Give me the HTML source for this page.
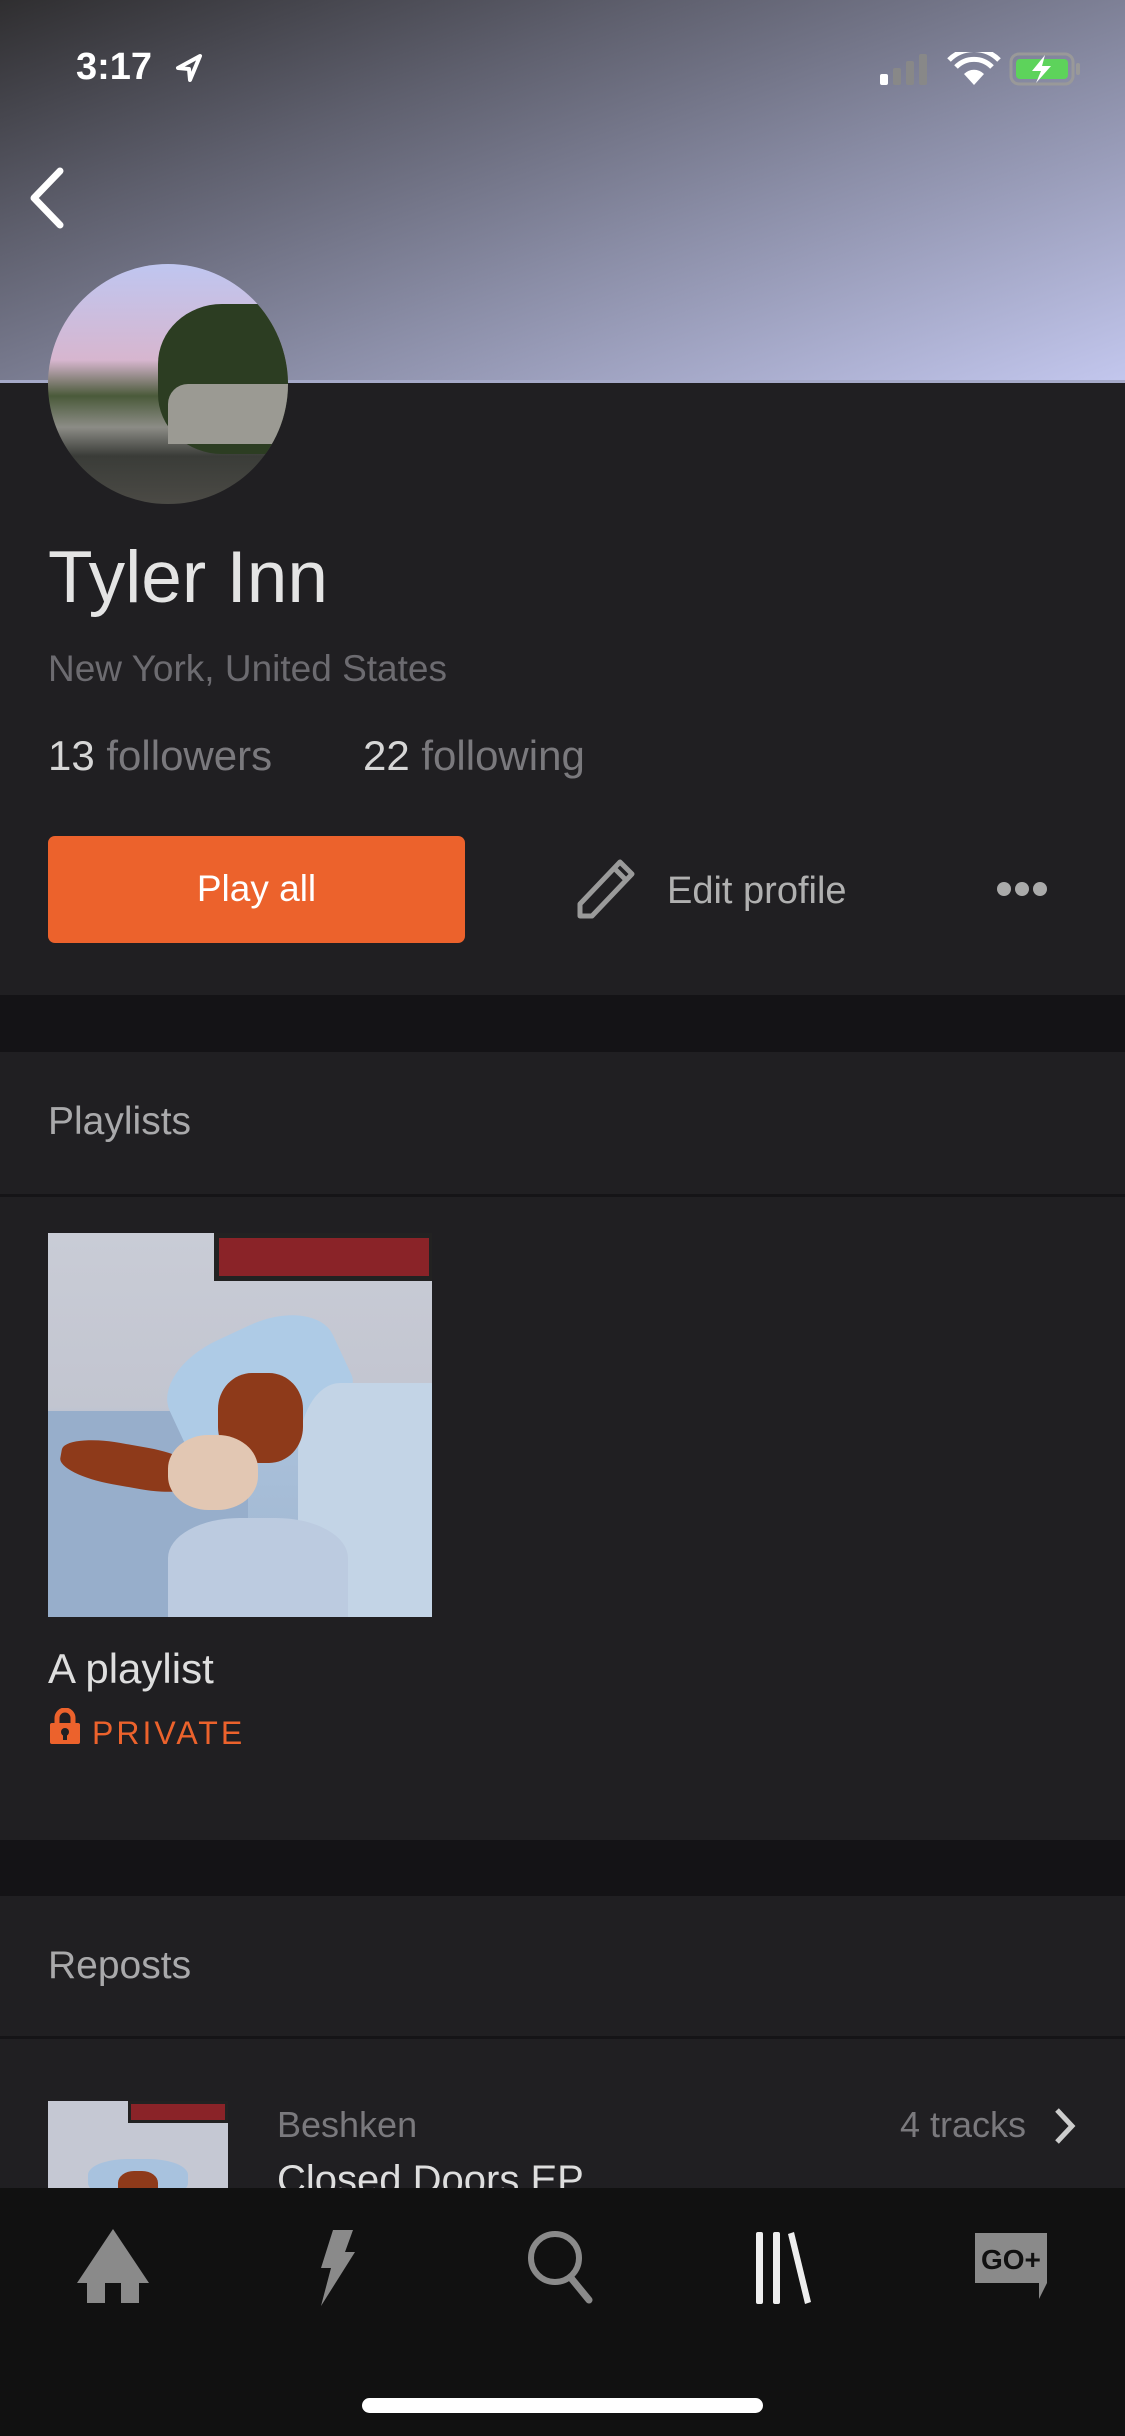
<!DOCTYPE html>
<html><head><meta charset="utf-8"><style>
*{margin:0;padding:0;box-sizing:border-box}
body{width:1125px;height:2436px;background:#201f22;font-family:"Liberation Sans",sans-serif;position:relative;overflow:hidden}
.a{position:absolute}
.t{position:absolute;white-space:nowrap}
</style></head><body>
<div class="a" style="left:0;top:0;width:1125px;height:383px;background:linear-gradient(160deg,#2f2e30 0%,#5e5f6d 30%,#8a8da6 60%,#c3c7ee 100%)"></div>
<div class="a" style="left:0;top:380px;width:1125px;height:3px;background:#a5a9c8"></div>
<div class="t" style="left:76px;top:46px;font-size:38px;color:#fff;font-weight:bold">3:17</div>
<svg class="a" style="left:174px;top:52px" width="30" height="32" viewBox="0 0 30 32"><path d="M26 4 L4 16 L15 17 L16 28 Z" fill="none" stroke="#fff" stroke-width="4" stroke-linejoin="round"/></svg>
<svg class="a" style="left:878px;top:52px" width="210" height="34" viewBox="0 0 210 34">
<rect x="2" y="22" width="8" height="11" rx="2" fill="#fff"/><rect x="15" y="16" width="8" height="17" rx="2" fill="#888"/><rect x="28" y="9" width="8" height="24" rx="2" fill="#888"/><rect x="41" y="2" width="8" height="31" rx="2" fill="#888"/>
<path d="M96 33 L86 22 A14 14 0 0 1 106 22 Z" fill="#fff"/><path d="M78 15 A25 25 0 0 1 114 15" fill="none" stroke="#fff" stroke-width="5"/><path d="M71 8 A35 35 0 0 1 121 8" fill="none" stroke="#fff" stroke-width="5"/>
<rect x="133" y="2" width="62" height="30" rx="8" fill="none" stroke="#999" stroke-width="3"/><rect x="138" y="7" width="52" height="20" rx="4" fill="#5dd35b"/><rect x="198" y="11" width="4" height="12" rx="2" fill="#999"/>
<path d="M167 3 L154 19 L163 19 L158 31 L173 14 L164 14 Z" fill="#fff"/></svg>
<svg class="a" style="left:24px;top:165px" width="44" height="66" viewBox="0 0 44 66"><path d="M36 6 L10 33 L36 60" fill="none" stroke="#fff" stroke-width="7" stroke-linecap="round" stroke-linejoin="round"/></svg>
<div class="a" style="left:48px;top:264px;width:240px;height:240px;border-radius:50%;overflow:hidden;background:linear-gradient(180deg,#bfc6f0 0%,#d7b6cf 40%,#4a5a3a 55%,#8c8c86 68%,#3a3c38 80%,#4b4a45 100%)">
<div class="a" style="left:110px;top:40px;width:160px;height:150px;border-radius:40% 0 0 40%;background:#2c3d22"></div>
<div class="a" style="left:120px;top:120px;width:140px;height:60px;background:#9b9a93;border-radius:20px 0 0 0"></div>
</div>
<div class="t" style="left:48px;top:536px;font-size:73px;color:#e4e4e4">Tyler Inn</div>
<div class="t" style="left:48px;top:648px;font-size:37px;color:#6c6b70">New York, United States</div>
<div class="t" style="left:48px;top:732px;font-size:42px;color:#7a797d"><span style="color:#d6d6d6">13</span> followers</div>
<div class="t" style="left:363px;top:732px;font-size:42px;color:#7a797d"><span style="color:#d6d6d6">22</span> following</div>
<div class="a" style="left:48px;top:836px;width:417px;height:107px;background:#ec622c;border-radius:7px"></div>
<div class="t" style="left:48px;top:868px;width:417px;text-align:center;font-size:37px;color:#fff">Play all</div>
<svg class="a" style="left:576px;top:856px" width="64" height="64" viewBox="0 0 64 64"><path d="M4 60 L4 48 L44 6 L56 18 L16 60 Z M38 12 L50 24" fill="none" stroke="#9a9a9a" stroke-width="5" stroke-linejoin="round"/></svg>
<div class="t" style="left:667px;top:870px;font-size:38px;color:#b0b0b0">Edit profile</div>
<svg class="a" style="left:996px;top:880px" width="52" height="18"><circle cx="8" cy="9" r="7" fill="#aaa"/><circle cx="26" cy="9" r="7" fill="#aaa"/><circle cx="44" cy="9" r="7" fill="#aaa"/></svg>
<div class="a" style="left:0;top:995px;width:1125px;height:57px;background:#141316"></div>
<div class="t" style="left:48px;top:1100px;font-size:39px;color:#a9a9ab">Playlists</div>
<div class="a" style="left:0;top:1194px;width:1125px;height:3px;background:#151417"></div>
<div class="a" style="left:48px;top:1233px;width:384px;height:384px;overflow:hidden;background:linear-gradient(180deg,#c9ccd6 0%,#c2c5d0 45%,#a9c0da 55%,#9fb5cf 100%)">
<div class="a" style="left:166px;top:0;width:220px;height:48px;background:#8a2328;border:5px solid #222"></div>
<div class="a" style="left:0;top:178px;width:200px;height:206px;background:#97aecb"></div>
<div class="a" style="left:118px;top:95px;width:180px;height:110px;background:#aecbe6;border-radius:40% 40% 20% 20%;transform:rotate(-25deg)"></div>
<div class="a" style="left:250px;top:150px;width:140px;height:240px;background:#c3d4e6;border-radius:30% 0 0 0"></div>
<div class="a" style="left:170px;top:140px;width:85px;height:90px;background:#8e3a1a;border-radius:40%"></div>
<div class="a" style="left:12px;top:212px;width:140px;height:42px;background:#8e3a1a;border-radius:40%;transform:rotate(10deg)"></div>
<div class="a" style="left:120px;top:202px;width:90px;height:75px;background:#e2c7b3;border-radius:45%"></div>
<div class="a" style="left:120px;top:285px;width:180px;height:100px;background:#bccbe0;border-radius:40% 40% 0 0"></div>
</div>
<div class="t" style="left:48px;top:1645px;font-size:42px;color:#dedede">A playlist</div>
<svg class="a" style="left:50px;top:1708px" width="30" height="36" viewBox="0 0 30 36"><path d="M7 16 V10 A8 8 0 0 1 23 10 V16" fill="none" stroke="#ec622c" stroke-width="5"/><rect x="0" y="15" width="30" height="21" rx="2" fill="#ec622c"/><circle cx="15" cy="24" r="4" fill="#201f22"/><rect x="13" y="25" width="4" height="7" fill="#201f22"/></svg>
<div class="t" style="left:92px;top:1715px;font-size:32px;color:#ec622c;letter-spacing:3px">PRIVATE</div>
<div class="a" style="left:0;top:1840px;width:1125px;height:56px;background:#141316"></div>
<div class="t" style="left:48px;top:1944px;font-size:39px;color:#a9a9ab">Reposts</div>
<div class="a" style="left:0;top:2036px;width:1125px;height:3px;background:#151417"></div>
<div class="a" style="left:48px;top:2101px;width:180px;height:90px;overflow:hidden;background:#c5c8d3">
<div class="a" style="left:80px;top:0;width:100px;height:22px;background:#8a2328;border:3px solid #222"></div>
<div class="a" style="left:40px;top:58px;width:100px;height:40px;background:#a8c2de;border-radius:40%"></div>
<div class="a" style="left:70px;top:70px;width:40px;height:30px;background:#8e3a1a;border-radius:40%"></div>
</div>
<div class="t" style="left:277px;top:2104px;font-size:36px;color:#7a797d">Beshken</div>
<div class="t" style="left:900px;top:2104px;font-size:36px;color:#7a797d">4 tracks</div>
<svg class="a" style="left:1052px;top:2106px" width="26" height="40"><path d="M5 4 L20 20 L5 36" fill="none" stroke="#ccc" stroke-width="5"/></svg>
<div class="t" style="left:277px;top:2158px;font-size:40px;color:#dedede">Closed Doors EP</div>
<div class="a" style="left:0;top:2188px;width:1125px;height:248px;background:#111111"></div>
<svg class="a" style="left:75px;top:2227px" width="76" height="76" viewBox="0 0 76 76"><path d="M38 2 L2 56 L12 56 L12 76 L30 76 L30 56 L46 56 L46 76 L64 76 L64 56 L74 56 Z" fill="#8a8a8a"/></svg>
<svg class="a" style="left:315px;top:2228px" width="44" height="80" viewBox="0 0 44 80"><path d="M18 2 L38 2 L30 24 L40 24 L6 78 L16 40 L6 40 Z" fill="#8a8a8a"/></svg>
<svg class="a" style="left:525px;top:2228px" width="72" height="76" viewBox="0 0 72 76"><circle cx="30" cy="30" r="24" fill="none" stroke="#8a8a8a" stroke-width="6"/><path d="M46 50 L64 72" stroke="#8a8a8a" stroke-width="7" stroke-linecap="round"/></svg>
<svg class="a" style="left:754px;top:2228px" width="70" height="78" viewBox="0 0 70 78"><rect x="2" y="4" width="7" height="72" rx="2" fill="#eee"/><rect x="19" y="4" width="7" height="72" rx="2" fill="#eee"/><path d="M34 6 L40 4 L57 74 L51 76 Z" fill="#eee"/></svg>
<svg class="a" style="left:973px;top:2231px" width="76" height="76" viewBox="0 0 76 76"><path d="M2 2 H74 V52 L66 68 V52 H2 Z" fill="#8a8a8a"/><text x="8" y="38" font-family="Liberation Sans" font-weight="bold" font-size="28" fill="#111">GO+</text></svg>
<div class="a" style="left:362px;top:2398px;width:401px;height:15px;background:#fff;border-radius:8px"></div>
</body></html>
